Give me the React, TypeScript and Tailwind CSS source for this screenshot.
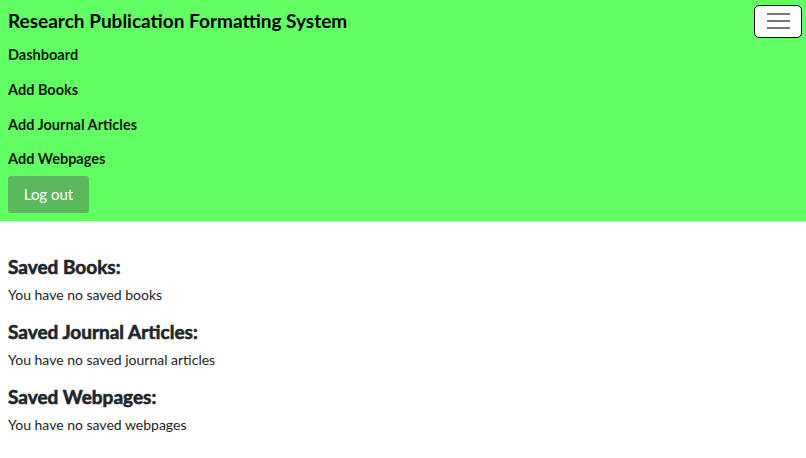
export default function App() {
  const links = ['Dashboard', 'Add Books', 'Add Journal Articles', 'Add Webpages'];
  const sections = [
    { title: 'Saved Books:', empty: 'You have no saved books' },
    { title: 'Saved Journal Articles:', empty: 'You have no saved journal articles' },
    { title: 'Saved Webpages:', empty: 'You have no saved webpages' },
  ];

  return (
    <div className="min-h-screen bg-white font-['Lato','Noto_Sans',sans-serif] text-[#212529]">
      <nav className="bg-[#61ff64] pl-2 pr-1 pt-1 pb-2">
        <div className="flex h-[34px] items-center justify-between">
          <span className="text-[19px] font-bold text-black">Research Publication Formatting System</span>
          <button className="flex h-[33px] w-[48px] flex-col items-center justify-center gap-[5px] rounded-[5px] border border-black bg-white">
            <span className="block h-[2px] w-[23px] bg-[#777]" />
            <span className="block h-[2px] w-[23px] bg-[#777]" />
            <span className="block h-[2px] w-[23px] bg-[#777]" />
          </button>
        </div>
        <ul>
          {links.map(l => (
            <li key={l} className="flex h-[34.6px] items-center text-[14.5px] font-bold text-[#0b1a0b]">
              {l}
            </li>
          ))}
        </ul>
        <button className="h-[37px] w-[81px] rounded-[3px] bg-[#5cb85c] pb-[1px] text-[15px] text-white">Log out</button>
      </nav>
      <main className="px-2 pt-[34px]">
        {sections.map(s => (
          <section key={s.title} className="mb-[15px]">
            <h4 className="text-[19px] leading-[23px] font-bold [-webkit-text-stroke:0.6px]">{s.title}</h4>
            <p className="mt-[6px] text-[14px] leading-[21px]">{s.empty}</p>
          </section>
        ))}
      </main>
    </div>
  );
}
